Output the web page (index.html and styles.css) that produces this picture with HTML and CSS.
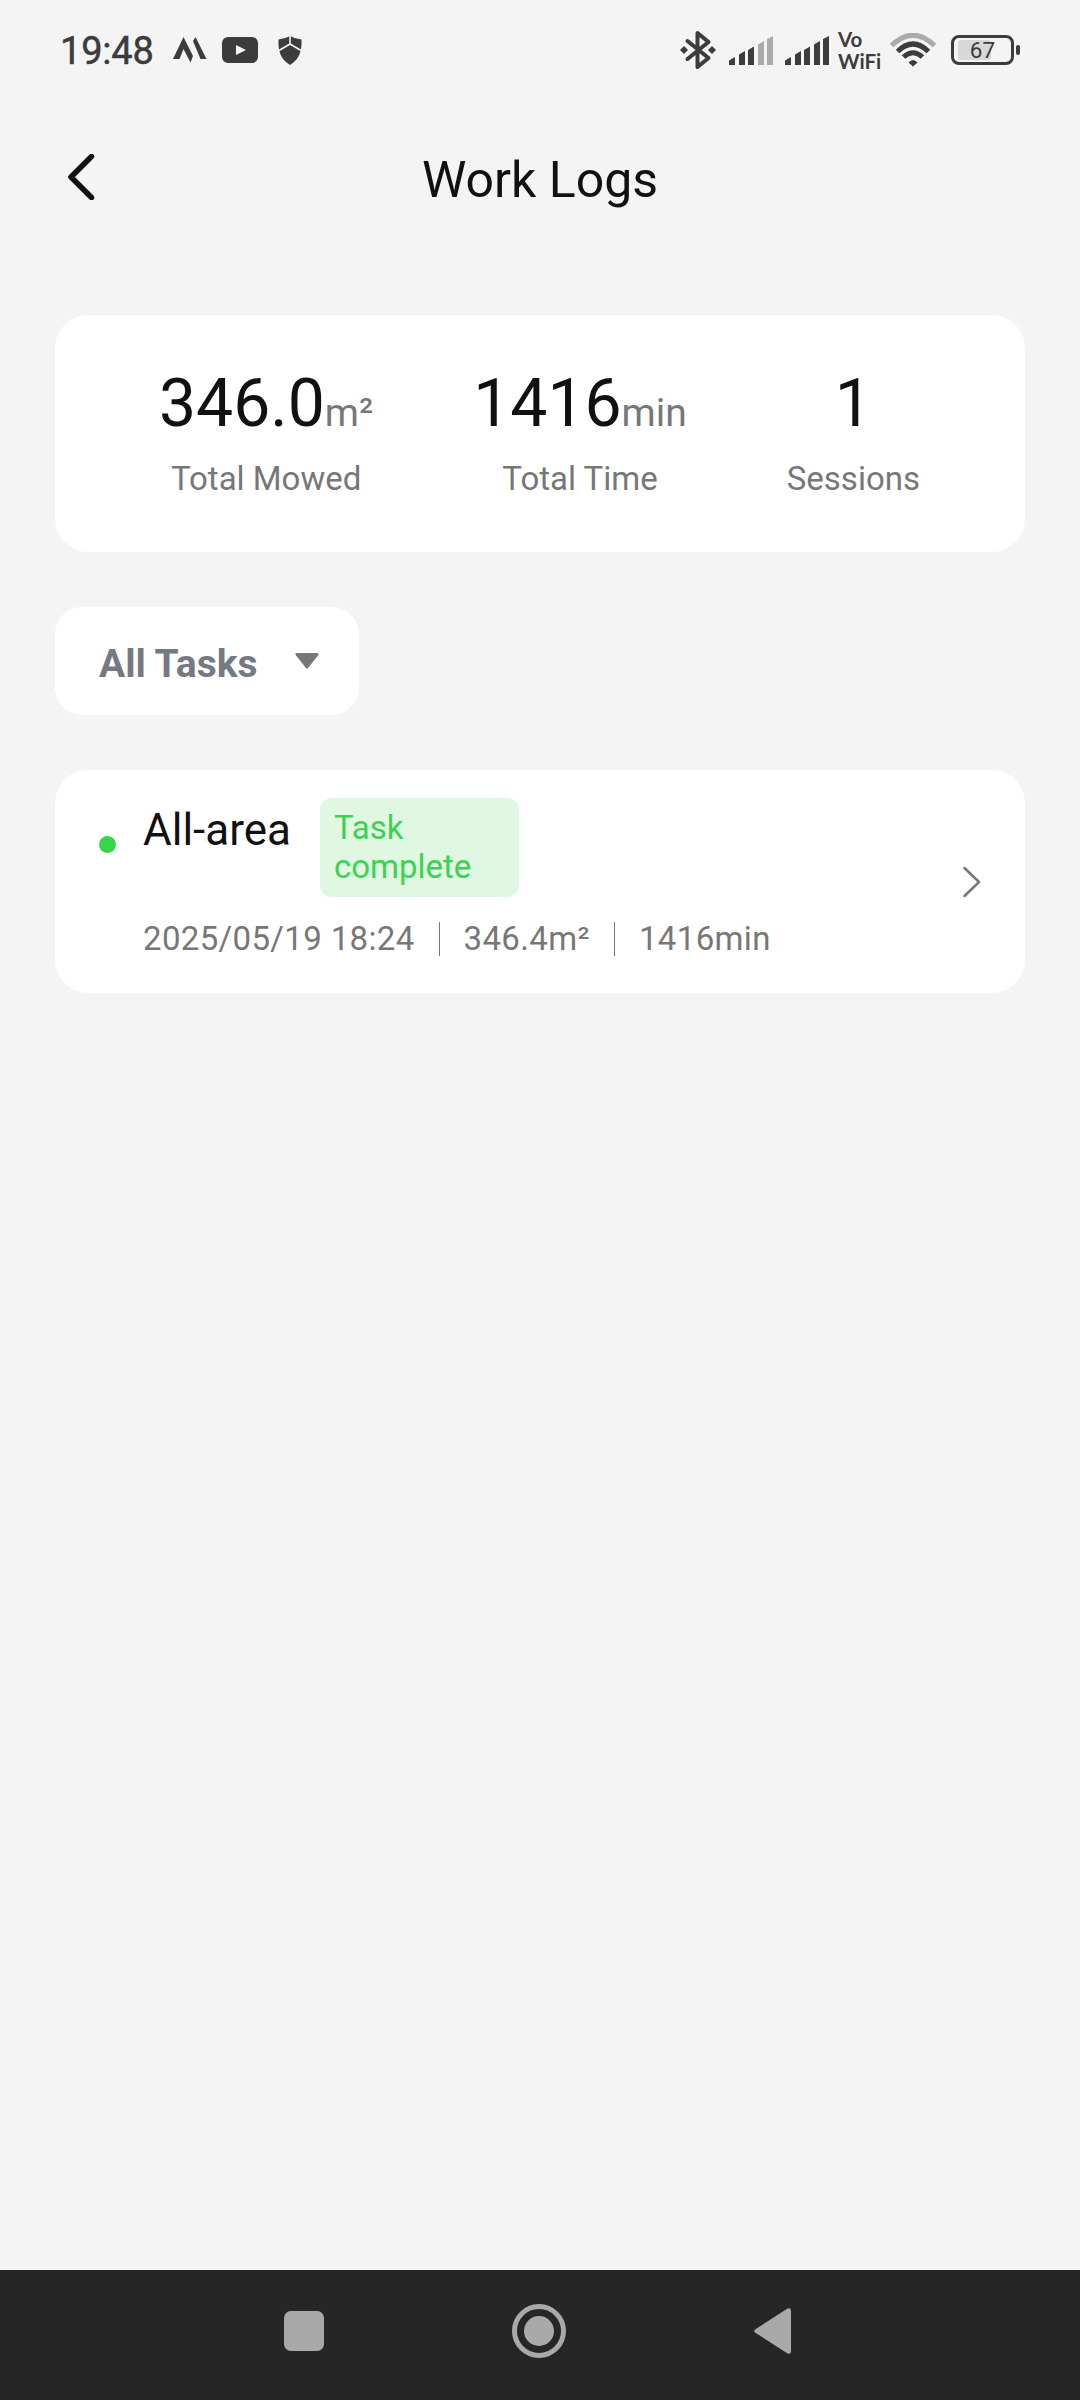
FILE: index.html
```html
<!DOCTYPE html>
<html lang="en">
<head>
  <meta charset="utf-8">
  <title>Work Logs</title>
  <link rel="stylesheet" href="styles.css">
</head>
<body>
<div class="screen">
  <div class="status-bar">
    <div class="status-left">
      <span class="time">19:48</span>
      <svg class="icon-m" width="34" height="28" viewBox="0 0 34 28">
        <path d="M0 23 L10.5 1 L20 20 L17.5 26.500 L10.5 13 L6.5 23 Z M20 5 L22.5 1 L33.500 23 H27.5 Z"/>
      </svg>
      <svg class="icon-video" width="36" height="26" viewBox="0 0 36 26">
        <rect width="36" height="26" rx="6"/>
        <path class="play" d="M14 8 L24 13 L14 18 Z"/>
      </svg>
      <svg class="icon-shield" width="24" height="29" viewBox="0 0 24 29">
        <path d="M12 0 Q17 3 23.5 3.5 C24 14 22 23 12 29 C2 23 0 14 .5 3.5 Q7 3 12 0 Z"/>
        <path class="cut" d="M12 0 V8 M1 14.5 L12 8 L23 14.5"/>
      </svg>
    </div>
    <div class="status-right">
      <svg class="icon-bt" width="36" height="40" viewBox="0 0 36 40">
        <path class="line" d="M7.5 11 L28.5 28 L17.5 37 V3 L28.5 12 L7.5 29"/>
        <path d="M4 16 L8 20 L4 24 L0 20 Z M32 16 L36 20 L32 24 L28 20 Z"/>
      </svg>
      <svg class="icon-signal" width="44" height="29" viewBox="0 0 44 29">
        <path d="M0 29 V24.5 L6 21 V29 Z M10 29 V18.5 L16 15 V29 Z M19 29 V14 L25 10.500 V29 Z"/>
        <path class="dim" d="M29 29 V8.500 L35 5 V29 Z M38 29 V3 L44 0 V29 Z"/>
      </svg>
      <svg class="icon-signal" width="44" height="29" viewBox="0 0 44 29">
        <path d="M0 29 V24.5 L6 21 V29 Z M10 29 V18.5 L16 15 V29 Z M19 29 V14 L25 10.500 V29 Z M29 29 V8.500 L35 5 V29 Z M38 29 V3 L44 0 V29 Z"/>
      </svg>
      <div class="vowifi">Vo<br>WiFi</div>
      <svg class="icon-wifi" width="46" height="34" viewBox="0 0 46 34">
        <path class="arc dim-arc" d="M1.500 12.500 Q23 -8 44.500 12.500"/>
        <path class="arc" d="M7.500 18.500 Q23 3.500 38.500 18.500"/>
        <path class="arc" d="M13.500 24 Q23 15.500 32.500 24"/>
        <path d="M23 33.500 L18.500 29.500 Q23 24.500 27.500 29.500 Z"/>
      </svg>
      <div class="battery"><div class="battery-level"></div><span>67</span></div>
      <div class="battery-cap"></div>
    </div>
  </div>

  <div class="header">
    <svg class="back" width="27" height="46" viewBox="0 0 27 46">
      <path d="M23.500 2.500 L3 23 L23.500 43.500"/>
    </svg>
    <h1>Work Logs</h1>
  </div>

  <div class="card stats">
    <div class="stat">
      <div class="value">346.0<span>m²</span></div>
      <div class="label">Total Mowed</div>
    </div>
    <div class="stat">
      <div class="value">1416<span>min</span></div>
      <div class="label">Total Time</div>
    </div>
    <div class="stat">
      <div class="value">1</div>
      <div class="label">Sessions</div>
    </div>
  </div>

  <div class="filter">
    <span>All Tasks</span>
    <svg width="24" height="16" viewBox="0 0 24 16">
      <path d="M1.500 0 H22.500 Q24.500 .5 23 2.500 L13 15 Q12 16.500 11 15 L1 2.500 Q-.5 .5 1.500 0 Z"/>
    </svg>
  </div>

  <div class="card task">
    <div class="dot"></div>
    <div class="task-body">
      <div class="task-top">
        <div class="task-name">All-area</div>
        <div class="tag">Task complete</div>
      </div>
      <div class="task-info">
        <span>2025/05/19 18:24</span>
        <i class="sep"></i>
        <span>346.4m²</span>
        <i class="sep"></i>
        <span>1416min</span>
      </div>
    </div>
    <svg class="chevron" width="18" height="32" viewBox="0 0 18 32">
      <path d="M1.500 2 L16 16 L1.500 30"/>
    </svg>
  </div>

  <div class="nav-bar">
    <svg width="40" height="40" viewBox="0 0 40 40">
      <rect width="40" height="40" rx="7"/>
    </svg>
    <svg width="54" height="54" viewBox="0 0 54 54">
      <circle class="ring" cx="27" cy="27" r="24.500"/>
      <circle cx="27" cy="27" r="15"/>
    </svg>
    <svg width="37" height="46" viewBox="0 0 37 46">
      <path d="M1 21.500 L33.500 .5 Q37 -.5 37 2.500 V43.500 Q37 46.500 33.500 45.500 L1 24.500 Q-.5 23 1 21.500 Z"/>
    </svg>
  </div>
</div>
</body>
</html>
```

FILE: styles.css
```css
* {
  box-sizing: border-box;
}

body {
  margin: 0;
  background-color: #f4f4f4;
  font-family: Roboto, "Liberation Sans", sans-serif;
  color: #111;
}

svg {
  display: block;
  flex-shrink: 0;
}

.screen {
  display: flex;
  flex-direction: column;
  width: 1080px;
  height: 2400px;
}

/* status bar */
.status-bar {
  display: flex;
  justify-content: space-between;
  height: 100px;
  padding: 0 60px 0 60px;
  color: #3c3c3c;
  fill: #3c3c3c;
}

.status-left,
.status-right {
  display: flex;
  align-items: center;
  height: 100px;
}

.time {
  width: 113px;
  font-size: 38px;
  line-height: 44px;
  letter-spacing: -0.2px;
  margin-top: 2px;
  -webkit-text-stroke: 0.5px #3c3c3c;
}

.icon-video {
  margin-left: 15px;
}

.icon-shield {
  margin-left: 20px;
}

.play {
  fill: #f4f4f4;
}

.cut {
  fill: none;
  stroke: #f4f4f4;
  stroke-width: 1.6;
}

.line {
  fill: none;
  stroke: #3c3c3c;
  stroke-width: 4;
  stroke-linecap: round;
  stroke-linejoin: round;
}

.icon-bt {
  margin-right: 1px;
}

.icon-signal {
  margin-left: 12px;
}

.dim {
  fill: #ababab;
}

.vowifi {
  width: 52px;
  padding-left: 9px;
  font-family: Lato, sans-serif;
  font-weight: bold;
  font-size: 20.5px;
  line-height: 22px;
}

.icon-wifi {
  margin-left: 9px;
}

.arc {
  fill: none;
  stroke: #3c3c3c;
  stroke-width: 5;
}

.dim-arc {
  stroke: #ababab;
}

.battery {
  display: flex;
  position: relative;
  width: 63px;
  height: 30px;
  margin-left: 15px;
  border: 3px solid #3c3c3c;
  border-radius: 8px;
  align-items: center;
  justify-content: center;
  font-size: 22.5px;
}

.battery span {
  position: relative;
}

.battery-level {
  position: absolute;
  left: 4px;
  top: 2px;
  width: 33px;
  height: 20px;
  border-radius: 3px;
  background-color: #d8d8d8;
}

.battery-cap {
  width: 4px;
  height: 10px;
  margin-left: 2px;
  border-radius: 2px;
  background-color: #3c3c3c;
}

/* header */
.header {
  display: grid;
  grid-template-columns: 100px 1fr 100px;
  align-items: center;
  height: 160px;
  margin-bottom: 55px;
  padding: 0 55px;
}

.back {
  margin: -6px 0 0 13px;
}

.back path {
  fill: none;
  stroke: #111;
  stroke-width: 5.5;
  stroke-linecap: round;
  stroke-linejoin: round;
}

.header h1 {
  margin: 0;
  font-size: 50px;
  font-weight: normal;
  text-align: center;
}

/* cards */
.card {
  display: flex;
  margin: 0 55px;
  border-radius: 33px;
  background-color: #fff;
}

.stats {
  justify-content: space-between;
  height: 237px;
  padding: 50px 105px 0 104px;
}

.stat {
  text-align: center;
}

.value {
  height: 78px;
  font-size: 66px;
  line-height: 78px;
}

.value span {
  font-size: 39px;
  line-height: 1;
  color: #777;
}

.label {
  margin-top: 16px;
  font-size: 33px;
  line-height: 39px;
  color: #777;
}

.filter {
  display: flex;
  align-items: center;
  justify-content: space-between;
  width: 304px;
  height: 108px;
  margin: 55px;
  padding: 0 40px 0 44px;
  border-radius: 27px;
  background-color: #fff;
  color: #757a82;
  font-size: 39px;
  font-weight: bold;
}

.filter span {
  padding-top: 6px;
}

.filter svg {
  fill: #777;
}

/* task row */
.task {
  height: 223px;
  padding: 28px 44px;
}

.dot {
  width: 17px;
  height: 17px;
  margin: 38px 27px 0 0;
  border-radius: 50%;
  background-color: #34d74c;
}

.task-body {
  flex: 1;
}

.task-top {
  display: flex;
}

.task-name {
  padding-top: 6px;
  font-size: 44px;
  line-height: 52px;
}

.tag {
  width: 199px;
  height: 99px;
  margin-left: 29px;
  padding: 10px 14px;
  border-radius: 12px;
  background-color: #e0f8e1;
  color: #3dd154;
  font-size: 33px;
  line-height: 39px;
}

.task-info {
  display: flex;
  align-items: center;
  margin-top: 22px;
  font-size: 33px;
  line-height: 39px;
  letter-spacing: 0.35px;
  color: #777;
}

.sep {
  width: 1px;
  height: 34px;
  margin: 0 24px;
  background-color: #777;
}

.chevron {
  align-self: center;
}

.chevron path {
  fill: none;
  stroke: #777;
  stroke-width: 2.5;
  stroke-linecap: round;
  stroke-linejoin: round;
}

/* navigation */
.nav-bar {
  display: flex;
  align-items: center;
  justify-content: space-between;
  height: 130px;
  margin-top: auto;
  padding: 0 289px 8px 284px;
  background-color: #262626;
  fill: #a9a9a9;
}

.ring {
  fill: none;
  stroke: #a9a9a9;
  stroke-width: 5;
}
```
